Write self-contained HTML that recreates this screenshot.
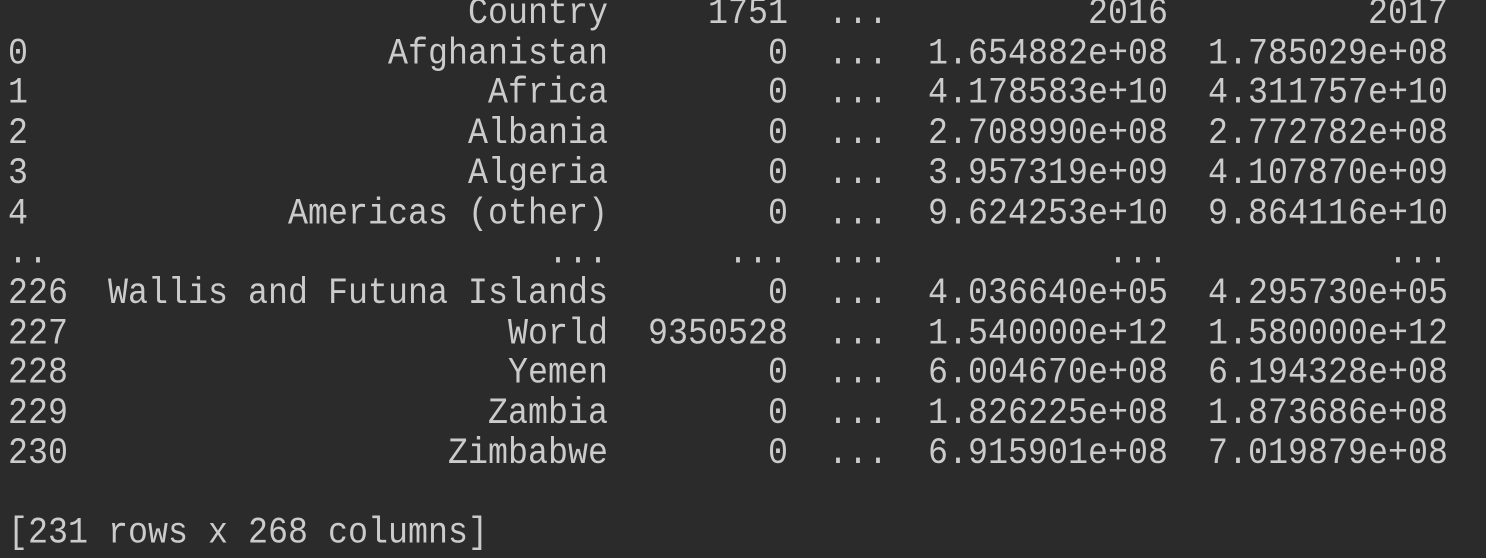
<!DOCTYPE html>
<html><head><style>
html,body{margin:0;padding:0;background:#2b2b2b;width:1486px;height:558px;overflow:hidden}
pre{margin:0;position:absolute;left:8px;top:-5px;font-family:"Liberation Mono",monospace;font-size:33.33px;line-height:35.714px;color:#cbcbcb;transform:scaleY(1.12);transform-origin:0 0}
</style></head><body>
<pre>                       Country     1751  ...          2016          2017
0                  Afghanistan        0  ...  1.654882e+08  1.785029e+08
1                       Africa        0  ...  4.178583e+10  4.311757e+10
2                      Albania        0  ...  2.708990e+08  2.772782e+08
3                      Algeria        0  ...  3.957319e+09  4.107870e+09
4             Americas (other)        0  ...  9.624253e+10  9.864116e+10
..                         ...      ...  ...           ...           ...
226  Wallis and Futuna Islands        0  ...  4.036640e+05  4.295730e+05
227                      World  9350528  ...  1.540000e+12  1.580000e+12
228                      Yemen        0  ...  6.004670e+08  6.194328e+08
229                     Zambia        0  ...  1.826225e+08  1.873686e+08
230                   Zimbabwe        0  ...  6.915901e+08  7.019879e+08

[231 rows x 268 columns]</pre>
</body></html>
